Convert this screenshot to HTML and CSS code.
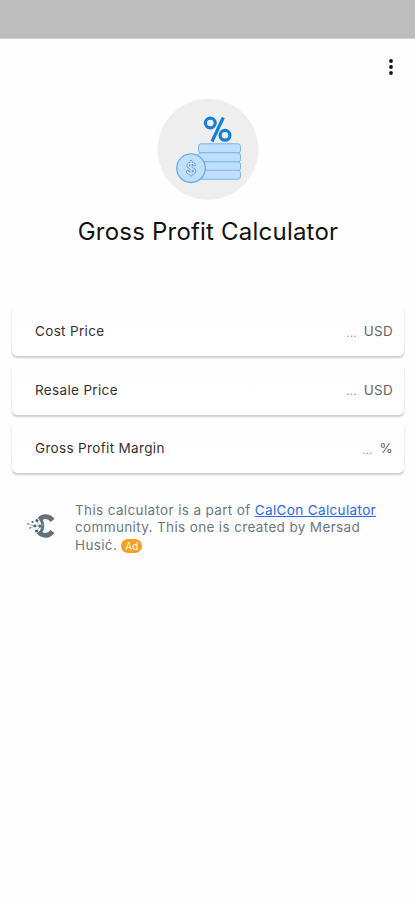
FILE: index.html
```html
<!DOCTYPE html>
<html lang="en">
<head>
<meta charset="utf-8">
<meta name="viewport" content="width=device-width, initial-scale=1">
<title>Gross Profit Calculator</title>
<link rel="stylesheet" href="styles.css">
</head>
<body>
<div class="status-bar"></div>
<header class="toolbar">
  <svg class="menu" width="6" height="18" viewBox="0 0 6 18" aria-label="Menu"><circle cx="3" cy="3" r="1.900"/><circle cx="3" cy="9" r="1.900"/><circle cx="3" cy="15" r="1.900"/></svg>
</header>
<main>
  <section class="hero">
    <svg class="hero-icon" width="102" height="102" viewBox="157 98 102 102">
      <circle cx="208" cy="149.300" r="50.500" fill="#eee"/>
      <g fill="none" stroke="#1580da" stroke-width="3.200">
        <circle cx="210.300" cy="123" r="4.900"/>
        <circle cx="225" cy="135.300" r="4.900"/>
        <path d="M223.300 117.500 212 141.500"/>
      </g>
      <g fill="#bfe0fc" stroke="#78b4ef" stroke-width="1">
        <rect x="198.500" y="143.800" width="42" height="9" rx="2.500"/>
        <rect x="198.500" y="152.800" width="42" height="9" rx="2.500"/>
        <rect x="198.500" y="161.800" width="42" height="9" rx="2.500"/>
        <rect x="198.500" y="170.200" width="42" height="9" rx="2.500"/>
        <circle cx="191" cy="168.200" r="14.300" stroke="#6caaec" stroke-width="1.300"/>
      </g>
      <g fill="none" stroke-linecap="round">
        <path d="M194.300 164.800C193.500 162.500 188 162.500 188 165.600S194.600 168 194.600 171.100 188.200 174.400 187.500 171.500M191 161.500V175" stroke="#659bd5" stroke-width="3"/>
        <path d="M194.300 164.800C193.500 162.500 188 162.500 188 165.600S194.600 168 194.600 171.100 188.200 174.400 187.500 171.500M191 161.500V175" stroke="#d9edff" stroke-width="1.300"/>
      </g>
    </svg>
    <h1>Gross Profit Calculator</h1>
  </section>
  <section class="fields">
    <div class="field"><span class="label">Cost Price</span><span class="dots">...</span><span class="unit">USD</span></div>
    <div class="field"><span class="label">Resale Price</span><span class="dots">...</span><span class="unit">USD</span></div>
    <div class="field"><span class="label">Gross Profit Margin</span><span class="dots">...</span><span class="unit">%</span></div>
  </section>
  <footer class="credit">
    <svg class="logo" width="30" height="26" viewBox="0 0 30 26">
      <path d="M26.500 7.500C23 2.500 16.500 2.500 13.500 6.500M26.500 18.500C23 23.500 16.500 23.500 12.500 19" fill="none" stroke="#60717e" stroke-width="4.800"/>
      <path d="M14.300 5.500Q19.500 13 14 20.500" fill="none" stroke="#60717e" stroke-width="3"/>
      <path d="M10 8 14.500 13 10 18.500M2 11 9 13 15.500 13 18 10.500M4 15 9 13" fill="none" stroke="#a6b4be" stroke-width="1"/>
      <g fill="#47647f"><circle cx="6.500" cy="9" r="1.100"/><circle cx="11" cy="7.500" r="1.600"/><circle cx="9" cy="13" r="1.400"/><circle cx="14" cy="13" r="1.500"/><circle cx="10.500" cy="18" r="1.600"/><circle cx="4" cy="15" r=".8"/><circle cx="1.800" cy="10.800" r=".7"/></g>
    </svg>
    <p>This calculator is a part of <a href="#">CalCon Calculator</a><br>community. This one is created by Mersad<br>Husić. <span class="ad">Ad</span></p>
  </footer>
</main>
</body>
</html>
```
FILE: styles.css
```css
* { box-sizing: border-box; }
body { margin: 0; min-height: 900px; background: #fefefe; font-family: Inter, "Liberation Sans", sans-serif; }
.status-bar { height: 39px; background: #bdbdbd; border-bottom: 1px solid #d2d2d2; }
.toolbar { height: 59px; display: flex; justify-content: flex-end; padding: 19px 21px 0 0; }
.menu { fill: #111; }
.hero { height: 206px; display: flex; flex-direction: column; align-items: center; }
.hero-icon { display: block; flex: none; }
h1 { margin: 17px 0 0; padding-left: 1px; font-size: 24px; line-height: 30px; font-weight: 400; letter-spacing: .21px; color: #111; white-space: nowrap; }
.fields { display: grid; gap: 6.500px; padding: 0 11px 0 12px; }
.field { height: 52px; display: flex; align-items: center; padding: 2px 11px 0 23px; border-radius: 6px; background: linear-gradient(#fefefe, #fff); box-shadow: 0 2px 2px -.5px rgba(0,0,0,.2); font-size: 13.500px; letter-spacing: .3px; }
.label { flex: 1; color: #333; font-size: 13.500px; letter-spacing: .34px; }
.dots { margin-right: 7px; color: #999; font-size: 12px; letter-spacing: 0; padding-top: 2px; }
.unit { color: #666; }
.credit { display: flex; padding: 29px 0 0 26px; color: #6d777e; }
.logo { flex: none; margin: 11px 19px 0 0; }
.credit p { margin: 0; font-size: 13.500px; line-height: 17.300px; letter-spacing: .36px; white-space: nowrap; }
a { color: #2868f0; text-underline-offset: 1px; }
.ad { display: inline-block; width: 21px; height: 14px; border-radius: 7px; background: #f9a01b; color: #fff; font-size: 10px; line-height: 14px; text-align: center; letter-spacing: 0; vertical-align: 0; }
```
